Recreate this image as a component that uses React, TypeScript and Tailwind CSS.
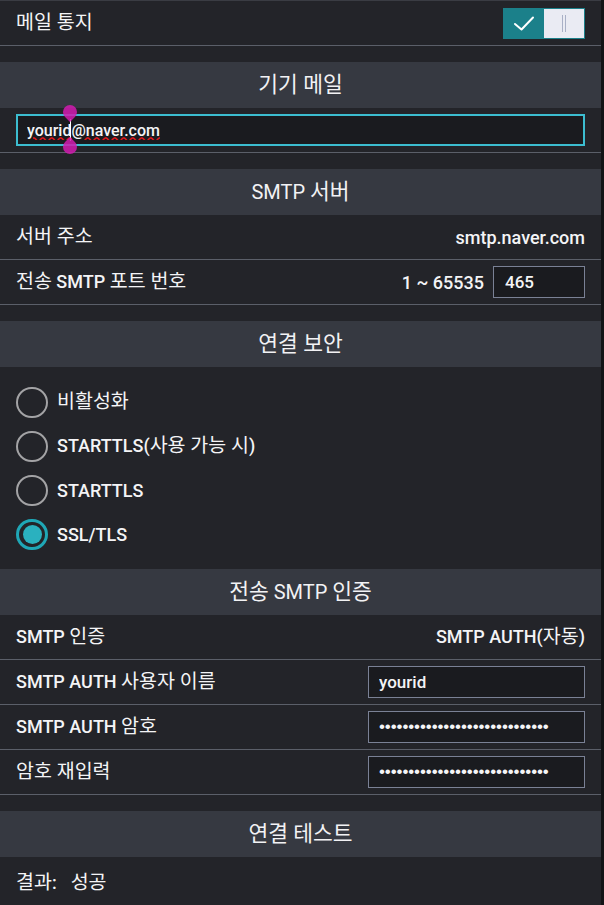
import { useState } from "react";

const FONT = { fontFamily: '"Roboto", "Noto Sans CJK KR", sans-serif' };
const HANGUL = /([가-힣]+(?: [가-힣]+)*)/;

// latin runs are drawn medium, hangul runs regular and a touch larger
function Txt({ s }: { s: string }) {
  const parts = s.split(HANGUL).filter(Boolean);
  return (
    <span>
      {parts.map((p, i) =>
        /[가-힣]/.test(p) ? (
          <span key={i} className="font-normal text-[19.5px]">
            {p}
          </span>
        ) : (
          <span key={i} className="font-medium">
            {p}
          </span>
        )
      )}
    </span>
  );
}

function SectionHeader({ title }: { title: string }) {
  const parts = title.split(HANGUL).filter(Boolean);
  return (
    <div className="h-[46px] bg-[#363941] flex items-center justify-center text-[20px] text-[#f2f2f4]">
      <span>
        {parts.map((p, i) =>
          /[가-힣]/.test(p) ? (
            <span key={i} className="text-[21.5px]">
              {p}
            </span>
          ) : (
            <span key={i}>{p}</span>
          )
        )}
      </span>
    </div>
  );
}

function Row({ label, children }: { label: string; children?: React.ReactNode }) {
  return (
    <div className="h-[45px] flex items-center justify-between px-4 border-b border-[#5b5f69] text-[18px] text-[#f4f4f6]">
      <Txt s={label} />
      {children}
    </div>
  );
}

function Toggle() {
  return (
    <div className="w-[82px] h-[31px] border border-[#1b808a] flex">
      <div className="flex-1 bg-[#1b808a] flex items-center justify-center">
        <svg width="24" height="18" viewBox="0 0 24 18" fill="none">
          <path d="M3 10 L9.5 15.5 L21 3.5" stroke="#ffffff" strokeWidth="2" strokeLinecap="round" strokeLinejoin="round" />
        </svg>
      </div>
      <div className="flex-1 bg-[#eaebf3] flex items-center justify-center gap-[2px]">
        <div className="w-px h-[17px] bg-[#a9b0c6]" />
        <div className="w-px h-[17px] bg-[#a9b0c6]" />
      </div>
    </div>
  );
}

function Radio({ label, checked, onClick }: { label: string; checked: boolean; onClick: () => void }) {
  return (
    <button onClick={onClick} className="h-[44px] flex items-center gap-[9px] text-[18px] text-[#f4f4f6] text-left">
      {checked ? (
        <span className="w-[32px] h-[31px] rounded-full border-[3px] border-[#1fa7b6] flex items-center justify-center">
          <span className="w-[19px] h-[19px] rounded-full bg-[#2ab1bf]" />
        </span>
      ) : (
        <span className="w-[32px] h-[31px] rounded-full border-2 border-[#a3a3a5]" />
      )}
      <Txt s={label} />
    </button>
  );
}

const fieldCls =
  "h-8 bg-[#1a1b1f] border border-[#7a8195] text-[17px] font-medium text-[#f4f4f6] outline-none";

const pwCls = `${fieldCls} w-[217px] px-[10px] text-[12px] tracking-[-0.1px]`;

export default function App() {
  const [security, setSecurity] = useState(3);
  const options = ["비활성화", "STARTTLS(사용 가능 시)", "STARTTLS", "SSL/TLS"];
  const pw = "•".repeat(29);

  return (
    <div className="flex min-h-[905px] bg-[#121416]" style={FONT}>
      <div className="flex-1 bg-[#232429] border-t border-[#3a3c43]">
        {/* 메일 통지 */}
        <div className="h-[45px] flex items-center justify-between px-4 border-b border-[#5b5f69] text-[18px] text-[#f4f4f6]">
          <Txt s="메일 통지" />
          <Toggle />
        </div>

        <div className="h-4" />
        <SectionHeader title="기기 메일" />
        <div className="relative px-4 py-[6px] border-b border-[#5b5f69]">
          <input
            readOnly
            value="yourid@naver.com"
            className="w-full h-8 px-[9px] bg-[#1a1b1f] border-2 border-[#3cbdd0] text-[16px] font-medium text-[#f4f4f6] outline-none underline decoration-wavy decoration-[#e0161b]"
          />
          {/* caret + selection handles */}
          <div className="absolute left-[70px] top-[11px] w-px h-[22px] bg-white" />
          <div className="absolute left-[63px] top-[-3px] w-[14px] h-[14px] rounded-full rounded-br-none rotate-45 bg-[#d21bb0]/85" />
          <div className="absolute left-[63px] top-[32px] w-[14px] h-[14px] rounded-full rounded-tl-none rotate-45 bg-[#d21bb0]/85" />
        </div>

        <div className="h-4" />
        <SectionHeader title="SMTP 서버" />
        <Row label="서버 주소">
          <span className="font-medium">smtp.naver.com</span>
        </Row>
        <Row label="전송 SMTP 포트 번호">
          <div className="flex items-center gap-[9px]">
            <span className="font-medium">1 ~ 65535</span>
            <input readOnly value="465" className={`${fieldCls} w-[92px] px-[11px] text-[15.5px]`} />
          </div>
        </Row>

        <div className="h-4" />
        <SectionHeader title="연결 보안" />
        <div className="flex flex-col pl-4 py-[13px]">
          {options.map((o, i) => (
            <Radio key={o} label={o} checked={security === i} onClick={() => setSecurity(i)} />
          ))}
        </div>

        <SectionHeader title="전송 SMTP 인증" />
        <Row label="SMTP 인증">
          <Txt s="SMTP AUTH(자동)" />
        </Row>
        <Row label="SMTP AUTH 사용자 이름">
          <input readOnly value="yourid" className={`${fieldCls} w-[217px] px-[10px]`} />
        </Row>
        <Row label="SMTP AUTH 암호">
          <input readOnly type="text" value={pw} className={pwCls} style={{ fontFamily: '"Liberation Sans", sans-serif' }} />
        </Row>
        <Row label="암호 재입력">
          <input readOnly type="text" value={pw} className={pwCls} style={{ fontFamily: '"Liberation Sans", sans-serif' }} />
        </Row>

        <div className="h-4" />
        <SectionHeader title="연결 테스트" />
        <div className="h-[52px] flex items-center px-4 text-[18px] text-[#f4f4f6]">
          <Txt s="결과:" />
          <span className="ml-[14px]">
            <Txt s="성공" />
          </span>
        </div>
      </div>
      <div className="w-[3px] bg-[#121416]" />
    </div>
  );
}
